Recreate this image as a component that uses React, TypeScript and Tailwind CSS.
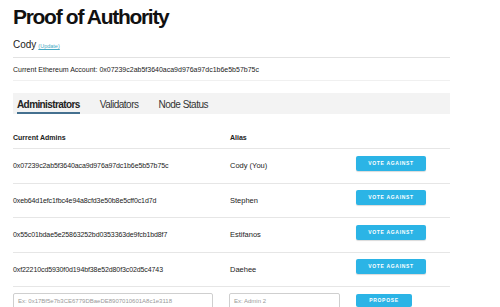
import React from 'react';

interface Admin {
  address: string;
  alias: string;
}

const admins: Admin[] = [
  { address: '0x07239c2ab5f3640aca9d976a97dc1b6e5b57b75c', alias: 'Cody (You)' },
  { address: '0xeb64d1efc1fbc4e94a8cfd3e50b8e5cff0c1d7d', alias: 'Stephen' },
  { address: '0x55c01bdae5e25863252bd0353363de9fcb1bd8f7', alias: 'Estifanos' },
  { address: '0xf22210cd5930f0d194bf38e52d80f3c02d5c4743', alias: 'Daehee' },
];

const tabs = ['Administrators', 'Validators', 'Node Status'];

const App: React.FC = () => {
  const [active, setActive] = React.useState('Administrators');

  return (
    <div className="w-[500px] h-[307px] overflow-hidden bg-white font-['Liberation_Sans',Arial,sans-serif] text-[#333]">
      <div className="ml-[13px] w-[437px]">
        {/* Title */}
        <h1 className="pt-[4px] text-[21px] leading-[26px] font-bold tracking-[-1.3px] text-[#111]">
          Proof of Authority
        </h1>

        {/* User */}
        <div className="mt-[9px] flex items-baseline gap-[2px]">
          <span className="text-[10px] leading-[12px] text-[#222]">Cody</span>
          <a className="text-[5.5px] text-[#45a9c4] underline cursor-pointer">(Update)</a>
        </div>

        <div className="mt-[6px] border-t border-[#e2e2e2]" />

        <p className="mt-[6.5px] text-[7px] leading-[9px] text-[#222]">
          Current Ethereum Account: 0x07239c2ab5f3640aca9d976a97dc1b6e5b57b75c
        </p>

        <div className="mt-[6.5px] border-t border-[#f0f0f0]" />

        {/* Tabs */}
        <div className="mt-[12px] h-[21px] bg-[#f3f3f3] flex items-stretch gap-[20px] px-[4px]">
          {tabs.map((t) => (
            <button
              key={t}
              onClick={() => setActive(t)}
              className={
                t === active
                  ? 'pt-[5px] text-[10px] leading-[12px] font-bold tracking-[-0.6px] text-[#222] border-b-2 border-[#44708f]'
                  : 'pt-[5px] text-[10px] leading-[12px] tracking-[-0.5px] text-[#333] border-b-2 border-transparent'
              }
            >
              {t}
            </button>
          ))}
        </div>

        {/* Table header */}
        <div className="grid grid-cols-[217px_126px_94px] h-[35px] items-end pb-[6.5px] border-b border-[#e6e6e6] text-[7px] leading-[9px] font-bold text-[#222]">
          <span>Current Admins</span>
          <span>Alias</span>
          <span />
        </div>

        {/* Rows */}
        {admins.map((a) => (
          <div
            key={a.address}
            className="grid grid-cols-[217px_126px_94px] h-[34.5px] items-center border-b border-[#e6e6e6] text-[7px] leading-[9px] text-[#222]"
          >
            <span className="tracking-[-0.1px]">{a.address}</span>
            <span className="text-[7.5px]">{a.alias}</span>
            <div className="mb-[5px] flex">
              <button className="w-[70px] h-[15px] rounded-[2px] bg-[#2bb4e6] text-white text-[5px] font-bold tracking-[0.7px] shadow-[0_1px_1px_rgba(0,0,0,0.15)]">
                VOTE AGAINST
              </button>
            </div>
          </div>
        ))}

        {/* Propose */}
        <div className="mt-[5.5px] grid grid-cols-[216px_127px_94px] items-start">
          <div className="w-[200px] h-[18px] border border-[#cfcfcf] rounded-[2px] px-[4px] pt-[3px] text-[6px] leading-[8px] text-[#999]">
            Ex: 0x17Bf5e7b3CE6779DBaeDE8907010601A8c1e3118
          </div>
          <div className="w-[111px] h-[18px] border border-[#cfcfcf] rounded-[2px] px-[4px] pt-[3px] text-[6px] leading-[8px] text-[#999]">
            Ex: Admin 2
          </div>
          <div className="flex pt-[1px]">
            <button className="w-[56px] h-[13px] rounded-[2px] bg-[#2bb4e6] text-white text-[5px] leading-[6px] font-bold tracking-[0.7px]">
              PROPOSE
            </button>
          </div>
        </div>
      </div>
    </div>
  );
};

export default App;
